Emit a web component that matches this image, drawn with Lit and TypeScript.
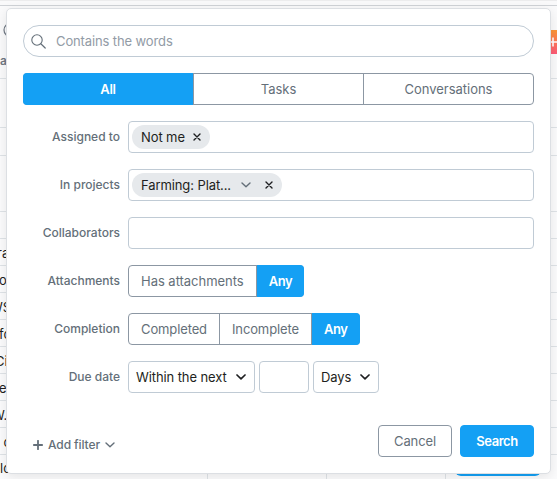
import { LitElement, html, css, svg } from "lit";
import { customElement } from "lit/decorators.js";
import { styleMap } from "lit/directives/style-map.js";

const chevron = (cls: string) => html`<svg class="chev ${cls}" viewBox="0 0 10 6" width="10" height="6">
  ${svg`<path d="M1 1l4 3.8L9 1" fill="none" stroke="currentColor" stroke-linecap="round" stroke-linejoin="round"/>`}
</svg>`;

const cross = html`<svg class="cross" viewBox="0 0 8 8" width="8" height="8">
  <path d="M1 1l6 6M7 1l-6 6" fill="none" stroke="currentColor" stroke-width="1.4" stroke-linecap="round" />
</svg>`;

const rows: [string, number][] = [
  ["ra", -3], ["o", -1], ["WS", -10], ["fo", -1], ["Ci", -5], ["e", -1], ["W.", -8], ["c", 3.5],
];

@customElement("task-table")
export class TaskTable extends LitElement {
  static styles = css`
    :host { display: block; height: 479px; background: #fbfbfc; overflow: hidden; font: 13px Inter, sans-serif; color: #1e1f21; }
    .strip { height: 1px; background: #ececed; }
    .gap { height: 4px; border-bottom: 1px solid #cfd2d6; background: #f9f9fa; }
    .head { box-sizing: border-box; height: 73px; border-bottom: 1px solid #dfe3e7; display: flex; justify-content: space-between; background: #fafafb; }
    .tools { padding-top: 16px; color: #6f7782; font-size: 12px; font-weight: 600; white-space: nowrap; }
    .ring { display: block; margin: 0 0 15px 3px; }
    .add { width: 26px; height: 24px; margin: 24px -13px 0 0; border-radius: 4px; background: linear-gradient(#fb9637, #fd5a78); flex: none; }
    .add svg { display: block; margin: 5px 0 0 4px; }
    .row { box-sizing: border-box; height: 27px; border-bottom: 1px solid #dfe3e7; line-height: 28px; white-space: nowrap; }
    .row span { display: block; }
    .tall { height: 49px; }
    .mid { height: 28px; }
    .large { height: 56px; }
    .last { display: grid; grid-template-columns: 208px 119px 119px 1fr; height: 24px; }
    .last > * { border-right: 1px solid #dfe3e7; }
    .last span { line-height: 27px; display: block; }
    .last .pill { border: 0; height: 21px; width: 86px; margin-left: 9px; background: #14a0f4; border-radius: 6px; }
  `;
  render() {
    return html`
      <div class="strip"></div><div class="gap"></div>
      <div class="head">
        <div class="tools">
          <svg class="ring" width="16" height="16" viewBox="0 0 16 16"><circle cx="8" cy="8" r="7" fill="none" stroke="#6f7782" stroke-width="1.2" /></svg>
          al
        </div>
        <div class="add"><svg width="11" height="13" viewBox="0 0 11 13"><path d="M0 7h9.5M5 2.5v9" stroke="#fff" stroke-width="1.6" /></svg></div>
      </div>
      <div class="row tall"></div><div class="row mid"></div><div class="row large"></div><div class="row"></div>
      ${rows.map(([t, x]) => html`<div class="row"><span style=${styleMap({ marginLeft: `${x}px` })}>${t}</span></div>`)}
      <div class="last"><span>lo</span><div></div><div></div><div class="pill"></div></div>
    `;
  }
}

@customElement("app-root")
export class AppRoot extends LitElement {
  static styles = css`
    :host { display: block; position: relative; width: 557px; height: 479px; overflow: hidden; font: 13px/18px Inter, sans-serif; color: #1e1f21; }
    * { box-sizing: border-box; }
    svg { display: block; flex: none; }
    .panel { position: absolute; left: 6px; top: 8px; width: 545px; height: 466px; background: #fff; border: 1px solid #dcdfe3; border-radius: 5px; padding: 16px 16px 0 16px; box-shadow: 0 3px 12px rgba(0, 0, 0, 0.09); }
    .search { height: 32px; border: 1px solid #c0cbd5; border-radius: 16px; display: flex; align-items: center; gap: 10px; padding-left: 7px; color: #929ba6; letter-spacing: -0.12px; }
    .search svg { color: #646f79; }
    .group { display: flex; height: 32px; border: 1px solid #8c97a3; border-radius: 4px; color: #646f79; }
    .group > span { display: flex; align-items: center; justify-content: center; padding: 0 12px; border-right: 1px solid #8c97a3; letter-spacing: -0.03px; white-space: nowrap; }
    .group > span:last-child { border-right: 0; }
    .group > .on { background: #14a0f4; color: #fff; font-weight: 600; letter-spacing: -0.4px; margin: -1px 0; border-color: #14a0f4; }
    .group > .on:first-child { margin-left: -1px; border-radius: 4px 0 0 4px; }
    .group > .on:last-child { margin-right: -1px; border-radius: 0 4px 4px 0; }
    .tight > span { letter-spacing: -0.12px; }
    .tabs { margin-top: 16px; display: grid; grid-template-columns: 170px 170px 1fr; }
    .tabs > .on { border-color: #8c97a3; letter-spacing: -0.2px; }
    .field { display: grid; grid-template-columns: 97px 1fr; gap: 8px; height: 32px; margin-top: 16px; }
    .label { text-align: right; font-size: 12px; font-weight: 500; color: #646f79; line-height: 31px; white-space: nowrap; }
    .box { border: 1px solid #c0cbd5; border-radius: 4px; display: flex; align-items: center; padding: 0 3px; }
    .chip { height: 24px; border-radius: 12px; background: #e6e9ec; display: flex; align-items: center; padding: 0 9px; white-space: nowrap; letter-spacing: -0.1px; }
    .line { display: flex; gap: 4px; }
    .select { padding: 0 8px 0 7px; justify-content: space-between; white-space: nowrap; letter-spacing: -0.1px; }
    .chev { stroke-width: 1.4; }
    .bold { stroke-width: 1.7; }
    .chip .chev { margin: 0 14px 0 10px; color: #646f79; }
    .chip .name { margin-right: 8px; }
    .within { width: 127px; }
    .amount { width: 50px; }
    .unit { width: 66px; }
    .footer { margin-top: 32px; display: flex; align-items: center; }
    .addf { display: flex; align-items: center; margin: 8px auto 0 10px; font-size: 12px; font-weight: 500; letter-spacing: -0.1px; color: #646f79; }
    .addf svg:first-child { margin-right: 5px; }
    .addf .chev { margin-left: 5px; }
    .btn { width: 74px; height: 32px; border-radius: 4px; border: 1px solid #8c97a3; color: #646f79; display: flex; align-items: center; justify-content: center; margin-left: 8px; letter-spacing: -0.1px; }
    .primary { background: #14a0f4; border-color: #14a0f4; color: #fff; font-weight: 600; letter-spacing: -0.45px; }
  `;
  field(label: string, content: unknown) {
    return html`<div class="field"><div class="label">${label}</div>${content}</div>`;
  }
  render() {
    return html`
      <task-table></task-table>
      <div class="panel">
        <div class="search">
          <svg width="15" height="15" viewBox="0 0 15 15"><circle cx="6" cy="6" r="5.2" fill="none" stroke="currentColor" stroke-width="1.1" /><path d="M9.8 9.8l4.4 4.2" stroke="currentColor" stroke-width="1.2" stroke-linecap="round" /></svg>
          <span>Contains the words</span>
        </div>
        <div class="group tabs"><span class="on">All</span><span>Tasks</span><span>Conversations</span></div>
        ${this.field("Assigned to", html`<div class="box"><div class="chip"><span class="name">Not me</span>${cross}</div></div>`)}
        ${this.field("In projects", html`<div class="box"><div class="chip"><span>Farming: Plat...</span>${chevron("")}${cross}</div></div>`)}
        ${this.field("Collaborators", html`<div class="box"></div>`)}
        ${this.field("Attachments", html`<div class="line"><div class="group"><span>Has attachments</span><span class="on">Any</span></div></div>`)}
        ${this.field("Completion", html`<div class="line"><div class="group tight"><span>Completed</span><span>Incomplete</span><span class="on">Any</span></div></div>`)}
        ${this.field("Due date", html`<div class="line">
          <div class="box select within"><span>Within the next</span>${chevron("bold")}</div>
          <div class="box amount"></div>
          <div class="box select unit"><span>Days</span>${chevron("bold")}</div>
        </div>`)}
        <div class="footer">
          <div class="addf">
            <svg width="10" height="10" viewBox="0 0 10 10"><path d="M5 .8v8.4M.8 5h8.4" stroke="currentColor" stroke-width="1.8" stroke-linecap="round" /></svg>
            <span>Add filter</span>${chevron("")}
          </div>
          <div class="btn">Cancel</div>
          <div class="btn primary">Search</div>
        </div>
      </div>
    `;
  }
}
